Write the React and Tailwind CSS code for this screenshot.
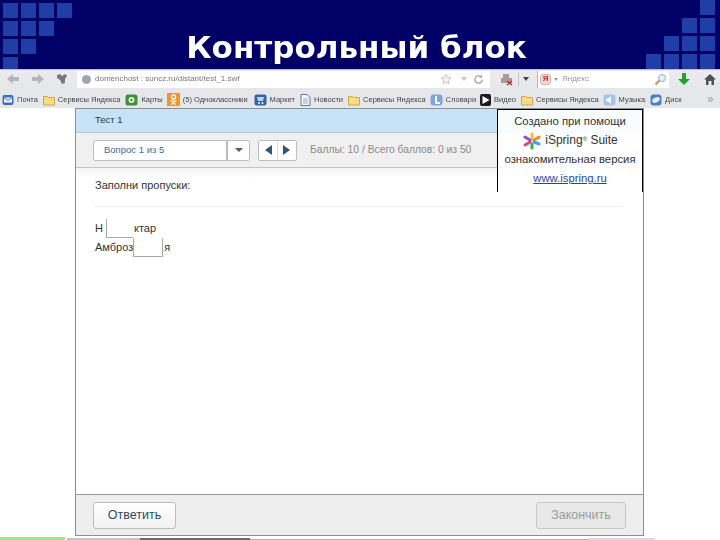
import React from 'react';
import { ChevronsRight } from 'lucide-react';

const LEFT_ROWS = [4, 3, 2, 1];
const RIGHT_ROWS = [1, 2, 3, 4];

const BOOKMARKS = [
    { label: 'Почта', kind: 'mail', gap: 'mr-[5px]' },
    { label: 'Сервисы Яндекса', kind: 'folder', gap: 'mr-[5px]' },
    { label: 'Карты', kind: 'map', gap: 'mr-[4px]' },
    { label: '(5) Одноклассники', kind: 'ok', gap: 'mr-[6px]' },
    { label: 'Маркет', kind: 'market', gap: 'mr-[5px]' },
    { label: 'Новости', kind: 'news', gap: 'mr-[5px]' },
    { label: 'Сервисы Яндекса', kind: 'folder', gap: 'mr-[4px]' },
    { label: 'Словари', kind: 'dict', gap: 'mr-[4px]' },
    { label: 'Видео', kind: 'video', gap: 'mr-[5px]' },
    { label: 'Сервисы Яндекса', kind: 'folder', gap: 'mr-[4px]' },
    { label: 'Музыка', kind: 'music', gap: 'mr-[5px]' },
    { label: 'Диск', kind: 'disk', gap: '' },
];

function Squares({ rows, alignRight }) {
    return (
        <div className={`flex flex-col gap-[3px] w-[72px] shrink-0 ${alignRight ? 'items-end' : 'items-start'}`}>
            {rows.map((count, i) => (
                <div key={i} className="flex gap-[3px]">
                    {Array.from({ length: count }).map((_, j) => (
                        <div key={j} className="w-[15px] h-[15px] bg-[#1f3fa6]"></div>
                    ))}
                </div>
            ))}
        </div>
    );
}

function BookmarkIcon({ kind }) {
    switch (kind) {
        case 'folder':
            return (
                <svg width="12" height="12" viewBox="0 0 12 12">
                    <path d="M.5 2.5h4l1 1h6v7.5H.5z" fill="#f7dc85" stroke="#c8a850" />
                </svg>
            );
        case 'mail':
            return (
                <svg width="12" height="12" viewBox="0 0 12 12">
                    <rect x=".5" y="1" width="11" height="10" rx="2" fill="#3a6fc0" />
                    <path d="M2 3.5h8v5H2z" fill="#f2f4f8" />
                    <path d="M2 3.5l4 3 4-3" fill="none" stroke="#3a6fc0" />
                </svg>
            );
        case 'map':
            return (
                <svg width="13" height="12" viewBox="0 0 13 12">
                    <rect x=".5" y=".5" width="12" height="11" rx="2.5" fill="#3f8f3a" />
                    <circle cx="6.5" cy="6" r="3" fill="#e8f2d8" />
                    <circle cx="6.5" cy="6" r="1.2" fill="#3f8f3a" />
                </svg>
            );
        case 'ok':
            return (
                <svg width="13" height="13" viewBox="0 0 13 13">
                    <rect width="13" height="13" fill="#f0952a" />
                    <circle cx="6.5" cy="4" r="2" fill="none" stroke="#fff" strokeWidth="1.3" />
                    <path d="M3.5 7.5c2 1.2 4 1.2 6 0M6.5 8.5v1M4.5 11.5l2-2 2 2" fill="none" stroke="#fff" strokeWidth="1.3" />
                </svg>
            );
        case 'market':
            return (
                <svg width="13" height="12" viewBox="0 0 13 12">
                    <rect x=".5" y=".5" width="12" height="11" rx="2" fill="#2f67a8" />
                    <path d="M3 3h7l-1 4H4z" fill="#bcd4ee" />
                    <circle cx="5" cy="9" r="1" fill="#fff" />
                    <circle cx="8.5" cy="9" r="1" fill="#fff" />
                </svg>
            );
        case 'news':
            return (
                <svg width="11" height="12" viewBox="0 0 11 12">
                    <path d="M1 .5h6l3 3v8H1z" fill="#f3f6fb" stroke="#5b7ba8" />
                    <path d="M3 5h5M3 7h5M3 9h5" stroke="#9ab0cc" />
                </svg>
            );
        case 'dict':
            return (
                <svg width="13" height="12" viewBox="0 0 13 12">
                    <rect x=".5" y=".5" width="12" height="11" rx="3" fill="#7ea6dc" />
                    <path d="M6 2v7h4" fill="none" stroke="#fff" strokeWidth="2" />
                </svg>
            );
        case 'video':
            return (
                <svg width="11" height="12" viewBox="0 0 11 12">
                    <rect width="11" height="12" rx="2" fill="#1c1c1c" />
                    <path d="M2.5 2l7 4-7 4z" fill="#fff" />
                </svg>
            );
        case 'music':
            return (
                <svg width="13" height="12" viewBox="0 0 13 12">
                    <rect x=".5" y=".5" width="12" height="11" rx="3" fill="#a5c3ea" />
                    <path d="M3 4.5h2L8 2v8L5 7.5H3z" fill="#f3f7fd" />
                </svg>
            );
        default:
            return (
                <svg width="12" height="12" viewBox="0 0 12 12">
                    <rect x=".5" y=".5" width="11" height="11" rx="3" fill="#4a80c8" />
                    <ellipse cx="6" cy="6" rx="4" ry="2.4" fill="#e6eef8" transform="rotate(-25 6 6)" />
                </svg>
            );
    }
}

function NavArrow({ flip }) {
    return (
        <svg width="14" height="12" viewBox="0 0 14 12" className={flip ? '-scale-x-100' : ''}>
            <path d="M1 6l6-5v3h6v4H7v3z" fill="#b4b6ba" />
        </svg>
    );
}

function Toolbar() {
    return (
        <div className="h-[19px] bg-gradient-to-b from-[#ececef] to-[#e6e7ea] flex items-center border-t border-[#bfc0c4]">
            <div className="flex items-center pl-[6px] w-[77px] shrink-0">
                <NavArrow />
                <div className="ml-[11px]"><NavArrow flip /></div>
                <svg width="12" height="12" viewBox="0 0 12 12" className="ml-[11px]">
                    <path d="M1 2l3-1 2 2 3-2 2 2-2 3v4l-3 1-2-4-3-2z" fill="#77797d" />
                </svg>
            </div>
            <div className="w-[413px] h-[17px] bg-white flex items-center pl-[5px] pr-[6px] shrink-0">
                <div className="w-[9px] h-[9px] rounded-full bg-[#a3a6aa] mr-[4px]"></div>
                <span className="text-[8px] text-[#777777]">domenchost : suncz.ru/distant/test_1.swf</span>
                <svg width="12" height="12" viewBox="0 0 24 24" className="ml-auto">
                    <path d="M12 2l3 7 7 .7-5.3 4.7 1.6 7.1L12 18l-6.3 3.5 1.6-7.1L2 9.700l7-.7z" fill="#f4f4f4" stroke="#c4c5c8" strokeWidth="2" />
                </svg>
                <div className="ml-[9px] border-x-[3px] border-x-transparent border-t-[4px] border-t-[#c4c5c8]"></div>
                <svg width="11" height="11" viewBox="0 0 24 24" className="ml-[6px]">
                    <path d="M20 12a8 8 0 1 1-3-6.200" fill="none" stroke="#a5a7aa" strokeWidth="3" />
                    <path d="M20 1v7h-7z" fill="#a5a7aa" />
                </svg>
            </div>
            <svg width="14" height="13" viewBox="0 0 14 13" className="ml-[10px]">
                <path d="M3 1h6v4H3zM1 5h11v5H1z" fill="#a69c9c" />
                <path d="M7 8l5 4M12 8l-5 4" stroke="#d02c2c" strokeWidth="1.600" />
            </svg>
            <div className="w-px h-[13px] bg-[#c2c3c6] ml-[4px]"></div>
            <div className="ml-[4px] border-x-[3px] border-x-transparent border-t-[4px] border-t-[#444444]"></div>
            <div className="ml-[8px] w-[132px] h-[17px] bg-white flex items-center pl-[2px] pr-[2px] border-l border-[#b5b7bb] shrink-0">
                <div className="w-[11px] h-[11px] rounded-[3px] bg-[#f4d6d2] border border-[#e2b0aa] flex items-center justify-center text-[8px] leading-none font-bold text-[#c0392b]">Я</div>
                <div className="ml-[3px] border-x-[2px] border-x-transparent border-t-[3px] border-t-[#999999]"></div>
                <span className="text-[8px] text-[#999999] ml-[4px]">Яндекс</span>
                <svg width="13" height="13" viewBox="0 0 13 13" className="ml-auto">
                    <circle cx="8" cy="5" r="3.500" fill="#e4eef8" stroke="#9ab0c4" />
                    <path d="M5.500 7.500L1.500 11.500" stroke="#b89a62" strokeWidth="2.200" />
                </svg>
            </div>
            <svg width="12" height="12" viewBox="0 0 12 12" className="ml-[9px]">
                <path d="M4 0h4v6h4l-6 6-6-6h4z" fill="#22a32f" />
            </svg>
            <svg width="12" height="11" viewBox="0 0 12 11" className="ml-[14px]">
                <path d="M6 0l6 5.500h-2V11H7.500V7h-3v4H2V5.500H0z" fill="#4f5356" />
            </svg>
        </div>
    );
}

function Bookmarks() {
    return (
        <div className="h-[20px] bg-[#e6e7ea] flex items-center pt-[3px] pl-[2px] pr-[5px] text-[7.5px] text-[#444444]">
            {BOOKMARKS.map((b, i) => (
                <div key={i} className={`flex items-center gap-[3px] shrink-0 ${b.gap}`}>
                    <BookmarkIcon kind={b.kind} />
                    <span>{b.label}</span>
                </div>
            ))}
            <ChevronsRight size={9} className="ml-auto text-[#555555]" />
        </div>
    );
}

function Watermark() {
    return (
        <div className="absolute top-0 right-0 w-[146px] h-[83px] bg-white/90 border-x border-t border-black flex flex-col items-center text-[11.300px] text-[#333333] leading-[19px] pt-[2px]">
            <div>Создано при помощи</div>
            <div className="flex items-center gap-[3px]">
                <svg width="20" height="18" viewBox="0 0 20 18">
                    <g strokeWidth="3" strokeLinecap="round">
                        <path d="M10 7V2" stroke="#f2c230" />
                        <path d="M12 8l5-3" stroke="#ee8a2a" />
                        <path d="M12 10l5 2" stroke="#3fa9dc" />
                        <path d="M10 12v4" stroke="#37b24d" />
                        <path d="M8 10l-5 3" stroke="#e0457b" />
                        <path d="M8 8L3 5" stroke="#8e54c9" />
                    </g>
                </svg>
                <span className="text-[12px]">iSpring<sup className="text-[6px]">®</sup> Suite</span>
            </div>
            <div>ознакомительная версия</div>
            <div className="text-[#2f3f9f] underline">www.ispring.ru</div>
        </div>
    );
}

function Quiz() {
    return (
        <div className="relative flex-1 w-[569px] ml-[75px] flex flex-col border-x border-t border-[#8f8f8f] bg-white text-[#333333]">
            <div className="h-[24px] shrink-0 bg-[#c6e3f8] border-b border-[#b4c8d8] flex items-center pl-[19px] text-[9.500px]">Тест 1</div>
            <div className="h-[35px] shrink-0 bg-[#f0f0f0] border-b border-[#c4c4c4] flex items-center pl-[17px] gap-[8px]">
                <div className="w-[157px] h-[21px] bg-white border border-[#bdbdbd] rounded-[2px] flex items-center">
                    <span className="flex-1 pl-[10px] text-[9.500px] text-[#3d6b94]">Вопрос 1 из 5</span>
                    <div className="w-[23px] h-full border-l-2 border-[#bdbdbd] flex items-center justify-center">
                        <div className="border-x-[4px] border-x-transparent border-t-[4px] border-t-[#3d5f80]"></div>
                    </div>
                </div>
                <div className="w-[39px] h-[21px] bg-white border border-[#bdbdbd] rounded-[2px] flex items-center justify-center gap-[5px]">
                    <div className="border-y-[5px] border-y-transparent border-r-[7px] border-r-[#2f5578]"></div>
                    <div className="w-px h-full bg-[#dddddd]"></div>
                    <div className="border-y-[5px] border-y-transparent border-l-[7px] border-l-[#2f5578]"></div>
                </div>
                <span className="ml-[5px] text-[10.300px] text-[#8a8a8a]">Баллы: 10 / Всего баллов: 0 из 50</span>
            </div>
            <div className="flex-1 flex flex-col px-[19px] bg-gradient-to-b from-[#f4f4f4] to-white to-[3%] text-[11px]">
                <div className="pt-[9px] h-[39px] border-b border-[#eeeeee] mr-[1px]">Заполни пропуски:</div>
                <div className="mt-[12px]">
                    <div className="flex items-center h-[19px]">
                        Н
                        <span className="ml-[3px] w-[27px] h-[19px] border-l border-b border-[#aaaaaa]"></span>
                        <span className="ml-[1px]">ктар</span>
                    </div>
                    <div className="flex items-center h-[19px]">
                        Амброз
                        <span className="w-[30px] h-[19px] border-x border-b border-[#aaaaaa]"></span>
                        <span className="ml-[1px]">я</span>
                    </div>
                </div>
            </div>
            <div className="h-[42px] shrink-0 bg-[#eeeeee] border-t border-[#999999] border-b border-b-[#8f8f8f] flex items-center justify-between px-[17px]">
                <div className="w-[83px] h-[27px] bg-gradient-to-b from-white to-[#f2f2f2] border border-[#bdbdbd] rounded-[3px] flex items-center justify-center text-[12.500px] text-[#2c4a63]">Ответить</div>
                <div className="w-[90px] h-[27px] bg-[#e8e8e8] border border-[#c8c8c8] rounded-[3px] flex items-center justify-center text-[12.500px] text-[#9a9a9a]">Закончить</div>
            </div>
            <Watermark />
        </div>
    );
}

export default function App() {
    return (
        <div className="w-[720px] h-[540px] overflow-hidden flex flex-col bg-white font-['Liberation_Sans',sans-serif]">
            <div className="h-[69px] shrink-0 bg-[#000066] flex justify-between blur-[0.3px]">
                <div className="pt-[3px] pl-[3px]"><Squares rows={LEFT_ROWS} /></div>
                <div className="flex-1 text-center text-white font-bold text-[31px] leading-none pt-[32px] pr-[5px] font-['DejaVu_Sans',sans-serif]">Контрольный блок</div>
                <div className="pr-[5px]"><Squares rows={RIGHT_ROWS} alignRight /></div>
            </div>
            <div className="shrink-0 blur-[0.4px]">
                <Toolbar />
                <Bookmarks />
            </div>
            <Quiz />
            <div className="h-[4px] shrink-0 flex items-end">
                <div className="w-[65px] h-[3px] bg-[#a8e08c]"></div>
                <div className="w-[73px] h-[2px] ml-[2px] bg-[#c0c4cc]"></div>
                <div className="w-[110px] h-[2px] bg-[#666c78]"></div>
                <div className="w-[338px] h-px bg-[#b5b5b5]"></div>
                <div className="w-[67px] h-[2px] bg-[#d8d8ec]"></div>
            </div>
        </div>
    );
}
